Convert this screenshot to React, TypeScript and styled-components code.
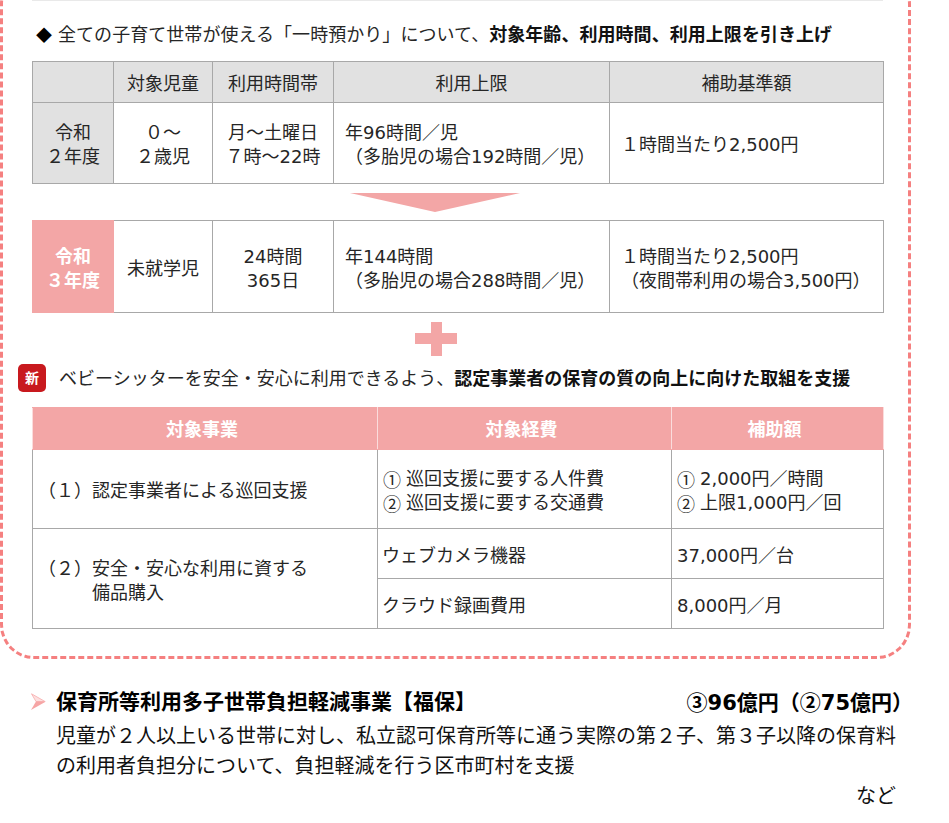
import React from "react";
import styled, { createGlobalStyle } from "styled-components";

const GlobalStyle = createGlobalStyle`
  html, body {
    margin: 0;
    padding: 0;
    background: #fff;
    overflow: hidden;
  }
  body {
    font-family: "DejaVu Sans", "Noto Sans CJK JP", sans-serif;
    font-size: 18px;
    line-height: 24px;
    color: #262626;
  }
`;

const Page = styled.div`
  width: 949px;
  height: 823px;
  overflow: hidden;
`;

const Frame = styled.section`
  box-sizing: border-box;
  width: 911px;
  margin-top: -30px;
  padding: 27px 25px 27px 29px;
  border: 3px dashed #f58080;
  border-radius: 34px;
`;

const TopRule = styled.div`
  height: 1px;
  background: #e9e9e9;
`;

const LeadRow = styled.div`
  display: flex;
  align-items: center;
  height: 24px;
  margin-top: 21px;
  letter-spacing: 0.05px;
`;

const LeadText = styled.span`
  display: block;
  padding-top: 2px;
`;

const Diamond = styled.span`
  width: 22px;
  margin-left: 4px;
  font-family: "Noto Sans CJK JP", sans-serif;
  font-size: 16px;
  color: #000;
`;

const NewBadge = styled.span`
  display: flex;
  align-items: center;
  justify-content: center;
  width: 28px;
  height: 28px;
  margin-left: -14px;
  margin-right: 13px;
  border-radius: 5px;
  background: #c8191e;
  color: #fff;
  font-size: 14px;
  font-weight: 700;
`;

const Strong = styled.b`
  font-weight: 700;
  color: #111;
`;

const Table = styled.table<{ $top: number }>`
  table-layout: fixed;
  width: 851px;
  margin-top: ${(p) => p.$top}px;
  border-collapse: collapse;
`;

const Col = styled.col<{ $w: number }>`
  width: ${(p) => p.$w}px;
`;

const Th = styled.th`
  height: 36px;
  padding: 4px 0 0;
  font-weight: 400;
  background: #e1e1e1;
  border: 1px solid #a8a8a8;
`;

const PinkTh = styled.th`
  height: 39px;
  padding: 2px 6px 0 0;
  font-weight: 700;
  color: #fff;
  background: #f3a6a6;
  border: 1px solid #f3a6a6;
  border-right-color: #fbdcdc;
  border-left-color: #fbdcdc;
`;

const Td = styled.td<{ $center?: boolean; $h?: number; $gap?: number }>`
  height: ${(p) => (p.$h ?? 80) - 4}px;
  padding: 4px 0 0 ${(p) => p.$gap ?? 11}px;
  text-align: ${(p) => (p.$center ? "center" : "left")};
  border: 1px solid #a8a8a8;
  white-space: pre-line;
`;

const YearCell = styled.td<{ $now?: boolean }>`
  padding: 4px 0 0;
  text-align: center;
  white-space: pre-line;
  font-weight: ${(p) => (p.$now ? 700 : 400)};
  color: ${(p) => (p.$now ? "#fff" : "inherit")};
  background: ${(p) => (p.$now ? "#f3a6a6" : "#e1e1e1")};
  border: 1px solid ${(p) => (p.$now ? "#f3a6a6" : "#a8a8a8")};
`;

const Indented = styled.div`
  padding-left: 54px;
`;

const Numbered = styled.div`
  display: flex;
  gap: 5px;
`;

const Mark = styled.span`
  font-family: "Noto Sans CJK JP", sans-serif;
`;

const ArrowWrap = styled.div`
  display: flex;
  justify-content: center;
  height: 19px;
  margin: 9px 0 8px;
  padding-right: 45px;
`;

const PlusWrap = styled.div`
  display: flex;
  justify-content: center;
  height: 34px;
  margin: 9px 0 8px;
  padding-right: 43px;
`;

const Badges = styled.div`
  display: flex;
  align-items: center;
  height: 28px;
`;

const Bottom = styled.section`
  width: 913px;
  padding: 29px 0 0 31px;
  box-sizing: border-box;
  color: #111;
  font-size: 20px;
`;

const BottomHead = styled.div`
  display: flex;
  align-items: center;
  height: 28px;
  font-size: 21px;
  font-weight: 700;
  color: #000;
`;

const Chevron = styled.svg`
  flex: none;
  margin: 0 10px 2px 0;
`;

const Budget = styled.span`
  margin-left: auto;
`;

const Body = styled.p`
  width: 850px;
  margin: 5px 0 0 25px;
  line-height: 30px;
`;

const Etc = styled.div`
  width: 840px;
  margin: 1px 0 0 25px;
  line-height: 28px;
  text-align: right;
`;

const Cols1 = [81, 99, 121, 276, 274];
const Cols2 = [345, 294, 212];

export default function App() {
  return (
    <Page>
      <GlobalStyle />
      <Frame>
        <TopRule />
        <LeadRow>
          <Diamond>◆</Diamond>
          <LeadText>
            全ての子育て世帯が使える「一時預かり」について、
            <Strong>対象年齢、利用時間、利用上限を引き上げ</Strong>
          </LeadText>
        </LeadRow>

        <Table $top={15}>
          <colgroup>
            {Cols1.map((w, i) => (
              <Col key={i} $w={w} />
            ))}
          </colgroup>
          <tbody>
            <tr>
              <Th />
              <Th>対象児童</Th>
              <Th>利用時間帯</Th>
              <Th>利用上限</Th>
              <Th>補助基準額</Th>
            </tr>
            <tr>
              <YearCell>{"令和\n２年度"}</YearCell>
              <Td $center $gap={0}>{"０～\n２歳児"}</Td>
              <Td $center $gap={0}>{"月～土曜日\n７時～22時"}</Td>
              <Td>{"年96時間／児\n（多胎児の場合192時間／児）"}</Td>
              <Td>１時間当たり2,500円</Td>
            </tr>
          </tbody>
        </Table>

        <ArrowWrap>
          <svg width="170" height="19" viewBox="0 0 170 19">
            <polygon points="0,0 170,0 85,19" fill="#f3a6a6" />
          </svg>
        </ArrowWrap>

        <Table $top={0}>
          <colgroup>
            {Cols1.map((w, i) => (
              <Col key={i} $w={w} />
            ))}
          </colgroup>
          <tbody>
            <tr>
              <YearCell $now>{"令和\n３年度"}</YearCell>
              <Td $h={91} $gap={13}>未就学児</Td>
              <Td $h={91} $center $gap={0}>{"24時間\n365日"}</Td>
              <Td $h={91}>{"年144時間\n（多胎児の場合288時間／児）"}</Td>
              <Td $h={91}>{"１時間当たり2,500円\n（夜間帯利用の場合3,500円）"}</Td>
            </tr>
          </tbody>
        </Table>

        <PlusWrap>
          <svg width="42" height="34" viewBox="0 0 42 34">
            <path d="M16 0h11v11h15v11H27v12H16V22H0V11h16z" fill="#f3a6a6" />
          </svg>
        </PlusWrap>

        <Badges>
          <NewBadge>新</NewBadge>
          <LeadText>
            ベビーシッターを安全・安心に利用できるよう、
            <Strong>認定事業者の保育の質の向上に向けた取組を支援</Strong>
          </LeadText>
        </Badges>

        <Table $top={15}>
          <colgroup>
            {Cols2.map((w, i) => (
              <Col key={i} $w={w} />
            ))}
          </colgroup>
          <tbody>
            <tr>
              <PinkTh>対象事業</PinkTh>
              <PinkTh>対象経費</PinkTh>
              <PinkTh>補助額</PinkTh>
            </tr>
            <tr>
              <Td $h={78} $gap={5}>（１）認定事業者による巡回支援</Td>
              <Td $h={78} $gap={5}>
                <Numbered><Mark>①</Mark><span>巡回支援に要する人件費</span></Numbered>
                <Numbered><Mark>②</Mark><span>巡回支援に要する交通費</span></Numbered>
              </Td>
              <Td $h={78} $gap={5}>
                <Numbered><Mark>①</Mark><span>2,000円／時間</span></Numbered>
                <Numbered><Mark>②</Mark><span>上限1,000円／回</span></Numbered>
              </Td>
            </tr>
            <tr>
              <Td $h={49} $gap={5} rowSpan={2}>
                （２）安全・安心な利用に資する
                <Indented>備品購入</Indented>
              </Td>
              <Td $h={49} $gap={4}>ウェブカメラ機器</Td>
              <Td $h={49} $gap={5}>37,000円／台</Td>
            </tr>
            <tr>
              <Td $h={49} $gap={4}>クラウド録画費用</Td>
              <Td $h={49} $gap={5}>8,000円／月</Td>
            </tr>
          </tbody>
        </Table>
      </Frame>

      <Bottom>
        <BottomHead>
          <Chevron width="15" height="17" viewBox="0 0 15 17">
            <path d="M.5.8L14 8.500H5z" fill="#fde0e0" stroke="#f8b8b8" />
            <path d="M0 17L15 8.500H5z" fill="#f6a5a5" />
          </Chevron>
          <span>保育所等利用多子世帯負担軽減事業【福保】</span>
          <Budget><Mark>③</Mark>96億円（<Mark>②</Mark>75億円）</Budget>
        </BottomHead>
        <Body>
          児童が２人以上いる世帯に対し、私立認可保育所等に通う実際の第２子、第３子以降の保育料
          <br />
          の利用者負担分について、負担軽減を行う区市町村を支援
        </Body>
        <Etc>など</Etc>
      </Bottom>
    </Page>
  );
}
